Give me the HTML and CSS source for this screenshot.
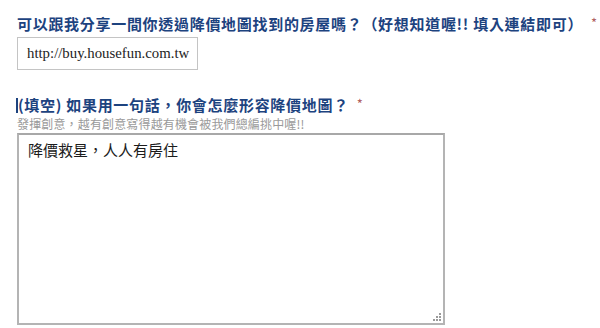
FILE: index.html
```html
<!DOCTYPE html>
<html lang="zh-Hant">
<head>
<meta charset="utf-8">
<link rel="stylesheet" href="styles.css">
</head>
<body>
<div class="form">
  <div class="q q1">
    <div class="label">可以跟我分享一間你透過降價地圖找到的房屋嗎？（好想知道喔!! 填入連結即可）<span class="req">*</span></div>
    <div class="input">http://buy.housefun.com.tw</div>
  </div>
  <div class="q q2">
    <div class="label"><span class="cursor"></span>(填空) 如果用一句話，你會怎麼形容降價地圖？<span class="req">*</span></div>
    <div class="hint">發揮創意，越有創意寫得越有機會被我們總編挑中喔!!</div>
    <div class="area-wrap">
      <div class="area">降價救星，人人有房住</div>
      <svg class="grip" width="10" height="10" viewBox="0 0 10 10">
        <rect x="7" y="1" width="2" height="2" fill="#9a9a9a"/>
        <rect x="4" y="4" width="2" height="2" fill="#9a9a9a"/>
        <rect x="7" y="4" width="2" height="2" fill="#9a9a9a"/>
        <rect x="1" y="7" width="2" height="2" fill="#9a9a9a"/>
        <rect x="4" y="7" width="2" height="2" fill="#9a9a9a"/>
        <rect x="7" y="7" width="2" height="2" fill="#9a9a9a"/>
      </svg>
    </div>
  </div>
</div>
</body>
</html>
```
FILE: styles.css
```css
html, body {
  margin: 0;
  padding: 0;
  background: #ffffff;
}
.form {
  padding: 15px 0 0 17px;
  font-family: "Noto Sans CJK TC", "Noto Sans", sans-serif;
}
.label {
  height: 18px;
  font-size: 15px;
  line-height: 18px;
  font-weight: bold;
  color: #1d437f;
  white-space: nowrap;
  letter-spacing: 0.7px;
}
.req {
  color: #b06060;
  font-size: 13px;
  line-height: 1;
  font-weight: normal;
  margin-left: 8px;
  vertical-align: 2px;
}
.input {
  margin-top: 4px;
  box-sizing: border-box;
  width: 181px;
  height: 33px;
  border: 1px solid #c4c4c4;
  font-family: "Liberation Serif", serif;
  font-size: 14.8px;
  line-height: 31px;
  color: #222;
  padding-left: 9px;
}
.q2 {
  margin-top: 26px;
}
.cursor {
  display: inline-block;
  width: 2px;
  height: 15px;
  background: #1d437f;
  vertical-align: -2px;
  margin-left: -1px;
}
.hint {
  font-size: 12px;
  line-height: 14px;
  color: #9a9a9a;
  margin-top: 3px;
  white-space: nowrap;
  letter-spacing: 0.15px;
}
.area-wrap {
  position: relative;
  margin-top: 2px;
  width: 428px;
  height: 192px;
}
.area {
  box-sizing: border-box;
  width: 428px;
  height: 192px;
  border: 2px solid #b4b4b4;
  border-top-color: #a8a8a8;
  padding: 5px 0 0 9px;
  font-size: 15px;
  line-height: 20px;
  color: #1c1c1c;
}
.grip {
  position: absolute;
  right: 3px;
  bottom: 3px;
}
```
